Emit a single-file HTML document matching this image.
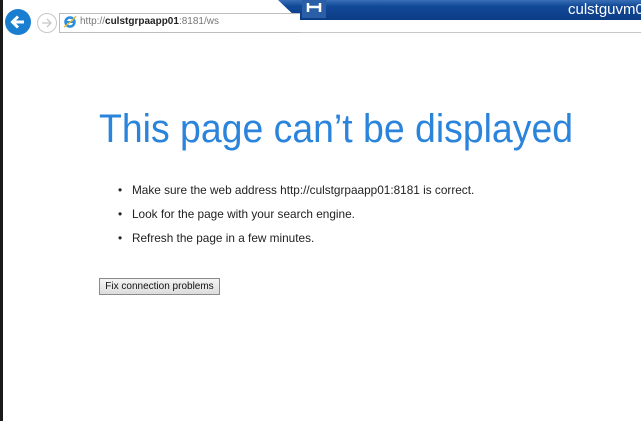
<!DOCTYPE html>
<html><head><style>
html,body{margin:0;padding:0;width:641px;height:421px;overflow:hidden;background:#fff;font-family:"Liberation Sans",sans-serif;position:relative}
.abs{position:absolute}
</style></head><body>
<div class="abs" style="left:0;top:0;width:3px;height:421px;background:#1a1a1a"></div>
<svg class="abs" style="left:270px;top:0" width="371" height="21">
<defs><linearGradient id="g" x1="0" y1="0" x2="0" y2="1"><stop offset="0" stop-color="#3a6fb8"/><stop offset="0.3" stop-color="#124a98"/><stop offset="1" stop-color="#0c3c85"/></linearGradient></defs>
<polygon points="8,0 371,0 371,20 29,20" fill="url(#g)"/>
<rect x="32" y="0" width="24" height="18" fill="#2a5fa8"/>
<path d="M38 3v9M50 3v9M38 7h12" stroke="#fff" stroke-width="2.5"/>
</svg>
<div class="abs" style="left:568px;top:1px;color:#fff;font-size:15px">culstguvm0</div>
<div class="abs" style="left:5px;top:9px;width:26px;height:26px;border-radius:50%;background:#1a7ed0"></div>
<svg class="abs" style="left:5px;top:9px" width="26" height="26"><path d="M19 13H8M13 7.5L7.5 13L13 18.5" stroke="#fff" stroke-width="3" fill="none"/></svg>
<svg class="abs" style="left:36px;top:12px" width="22" height="22"><circle cx="11" cy="11" r="9.5" fill="#fff" stroke="#c8c8c8"/><path d="M6 11h9M11 7l4 4-4 4" stroke="#c8c8c8" stroke-width="1.3" fill="none"/></svg>
<div class="abs" style="left:59px;top:13px;width:240px;height:18px;border:1px solid #bdbdbd;border-right:none;background:#fff"></div>
<div class="abs" style="left:300px;top:32px;width:341px;height:1px;background:#c8c8c8"></div>
<svg class="abs" style="left:63px;top:15px" width="14" height="14"><circle cx="7" cy="7" r="4.5" fill="none" stroke="#2a8ee0" stroke-width="2.5"/><path d="M2 7h10" stroke="#2a8ee0" stroke-width="2"/><path d="M1 12C4 10 11 4 13 1" stroke="#e8b830" stroke-width="1.3" fill="none"/></svg>
<div class="abs" style="left:80px;top:16px;font-size:10px;color:#777">http://<b style="color:#222">culstgrpaapp01</b>:8181/ws</div>
<div class="abs" style="left:99px;top:107px;font-size:40px;color:#2a84dc;white-space:nowrap;transform:scaleX(0.935);transform-origin:0 0;font-weight:300;-webkit-text-stroke:0">This page can’t be displayed</div>
<div class="abs" style="left:118px;top:178px;font-size:11.8px;color:#222;line-height:24px;white-space:nowrap">
<div>•&nbsp;&nbsp;&nbsp;Make sure the web address http://culstgrpaapp01:8181 is correct.</div>
<div>•&nbsp;&nbsp;&nbsp;Look for the page with your search engine.</div>
<div>•&nbsp;&nbsp;&nbsp;Refresh the page in a few minutes.</div>
</div>
<div class="abs" style="left:99px;top:278px;width:119px;height:15px;border:1px solid #8a8a8a;background:linear-gradient(#f4f4f4,#dcdcdc);font-size:10px;color:#111;text-align:center;line-height:15px">Fix connection problems</div>
</body></html>
